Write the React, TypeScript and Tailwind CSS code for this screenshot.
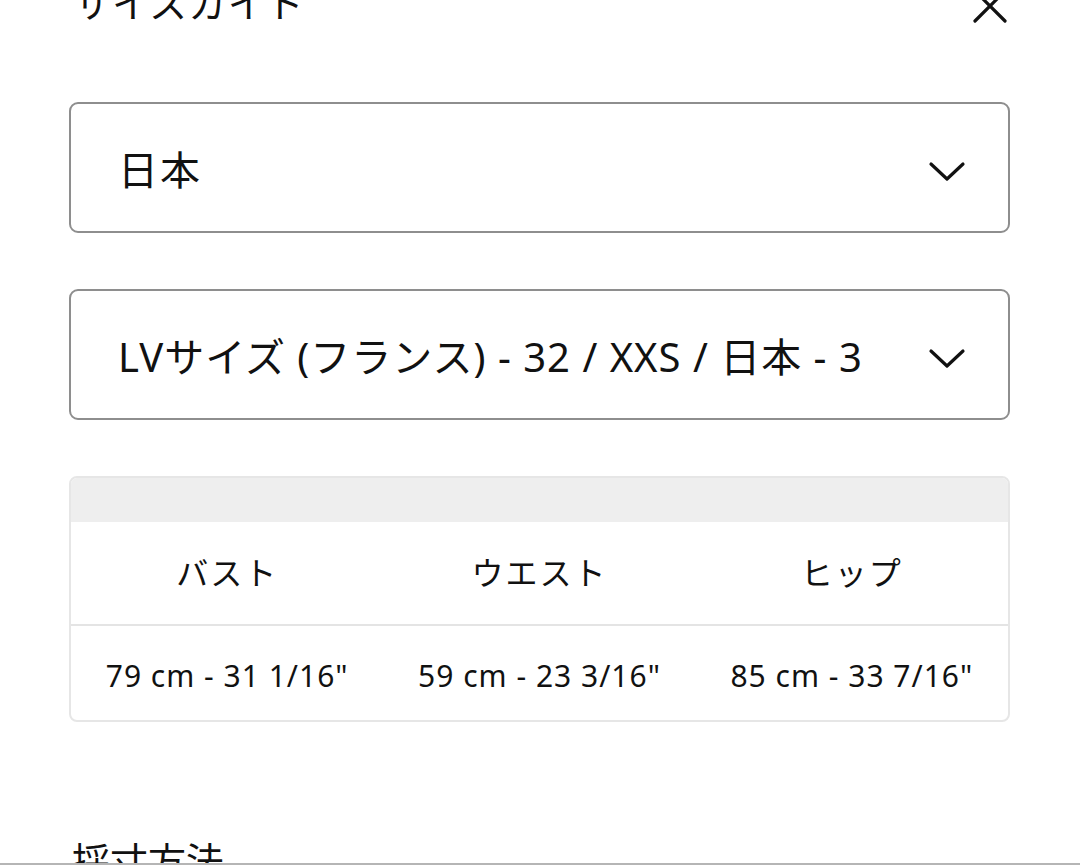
import React from "react";

const jp = "font-['Noto_Sans','Noto_Sans_CJK_JP',sans-serif]";

function Chevron() {
  return (
    <svg width="38" height="24" viewBox="0 0 38 24" fill="none" className="mt-[8px] shrink-0">
      <path d="M3 4 L19 19 L35 4" stroke="#111" strokeWidth="3.2" strokeLinecap="round" strokeLinejoin="round" />
    </svg>
  );
}

function Select({ label, track }: { label: string; track: string }) {
  return (
    <div className="flex h-[131px] items-center justify-between rounded-[9px] border-2 border-[#8e8e8e] pl-[47px] pr-[42px]">
      <span className={`pt-[5px] text-[40px] leading-none text-[#111] ${track}`}>{label}</span>
      <Chevron />
    </div>
  );
}

export default function App() {
  const headers = ["バスト", "ウエスト", "ヒップ"];
  const values = ['79 cm - 31 1/16"', '59 cm - 23 3/16"', '85 cm - 33 7/16"'];
  return (
    <div className={`relative h-[865px] w-[1080px] overflow-hidden bg-white ${jp}`}>
      <div className="pl-[69px] pr-[70px]">
        <div className="-mt-[22px] flex h-[80px] items-start justify-between">
          <span className="pl-[4px] text-[38px] leading-[48px] text-[#111] tracking-[1px]">サイズガイド</span>
          <svg width="36" height="36" viewBox="0 0 36 36" className="mr-[2px] mt-[10px]">
            <path d="M3 3 L33 33 M33 3 L3 33" stroke="#111" strokeWidth="3.2" strokeLinecap="round" />
          </svg>
        </div>
        <div className="mt-[44px] flex flex-col gap-[56px]">
          <Select label="日本" track="tracking-[2px]" />
          <Select label="LVサイズ (フランス) - 32 / XXS / 日本 - 3" track="tracking-[1px]" />
          <div className="overflow-hidden rounded-[8px] border-2 border-[#e6e6e6]">
            <div className="h-[44px] bg-[#eeeeee]" />
            <div className="grid h-[104px] grid-cols-3 items-center border-b-2 border-[#e4e4e4]">
              {headers.map((h) => (
                <div key={h} className="text-center text-[32px] leading-none text-[#111] tracking-[2px]">
                  {h}
                </div>
              ))}
            </div>
            <div className="grid h-[94px] grid-cols-3 items-center pt-[6px]">
              {values.map((v) => (
                <div key={v} className="text-center text-[30px] leading-none text-[#111] tracking-[1px]">
                  {v}
                </div>
              ))}
            </div>
          </div>
        </div>
        <div className="mt-[114px] pl-[3px] text-[38px] leading-[48px] text-[#111]">採寸方法</div>
      </div>
      <div className="absolute bottom-0 left-0 h-[2px] w-full bg-[#b5b5b5]" />
    </div>
  );
}
